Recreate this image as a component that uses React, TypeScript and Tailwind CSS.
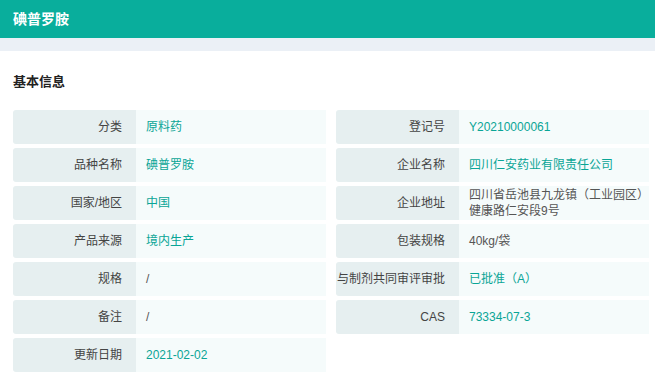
import React from "react";

type Row = { label: string; value: string; plain?: boolean };

const left: Row[] = [
  { label: "分类", value: "原料药" },
  { label: "品种名称", value: "碘普罗胺" },
  { label: "国家/地区", value: "中国" },
  { label: "产品来源", value: "境内生产" },
  { label: "规格", value: "/", plain: true },
  { label: "备注", value: "/", plain: true },
  { label: "更新日期", value: "2021-02-02" },
];

const right: Row[] = [
  { label: "登记号", value: "Y20210000061" },
  { label: "企业名称", value: "四川仁安药业有限责任公司" },
  { label: "企业地址", value: "四川省岳池县九龙镇（工业园区）健康路仁安段9号", plain: true },
  { label: "包装规格", value: "40kg/袋", plain: true },
  { label: "与制剂共同审评审批", value: "已批准（A）" },
  { label: "CAS", value: "73334-07-3" },
];

const Cell = ({ row }: { row: Row }) => (
  <div className="flex h-[34px]">
    <div className="w-[123px] shrink-0 rounded-l-[3px] bg-[#e6eff0] pr-[14px] flex items-center justify-end text-[#444] whitespace-nowrap">
      {row.label}
    </div>
    <div
      className={
        "flex-1 bg-[#f5fbfb] pl-[10px] pr-1 flex items-center " +
        (row.plain ? "text-[#555]" : "text-[#0aa596]")
      }
    >
      {row.value}
    </div>
  </div>
);

const App = () => {
  return (
    <div
      className="w-[655px] h-[376px] overflow-hidden bg-white text-[12px] leading-[16px]"
      style={{ fontFamily: '"Liberation Sans", "Noto Sans CJK SC", sans-serif' }}
    >
      <div className="h-[38px] bg-[#09ae9c] pl-[13px] flex items-center text-white text-[14px] font-bold">
        碘普罗胺
      </div>
      <div className="h-[13px] bg-[#ebf0f6]" />

      <div className="pl-[13px] pr-[6px]">
        <h2 className="pt-[22px] text-[13px] font-bold text-[#222] leading-[18px]">基本信息</h2>

        <div className="mt-[19px] grid grid-cols-2 gap-x-[10px]">
          <div className="flex flex-col gap-[4px]">
            {left.map((r) => (
              <Cell key={r.label} row={r} />
            ))}
          </div>
          <div className="flex flex-col gap-[4px]">
            {right.map((r) => (
              <Cell key={r.label} row={r} />
            ))}
          </div>
        </div>
      </div>
    </div>
  );
};

export default App;
